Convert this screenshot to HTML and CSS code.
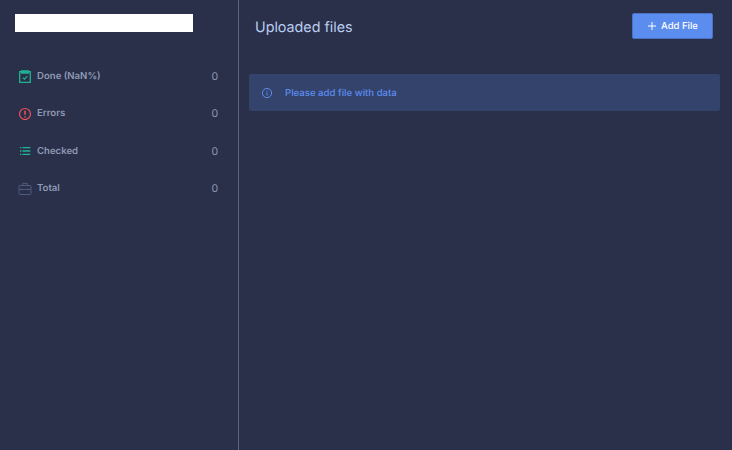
FILE: index.html
```html
<!DOCTYPE html>
<html lang="en">
<head>
<meta charset="utf-8">
<title>Uploaded files</title>
<link rel="stylesheet" href="styles.css">
</head>
<body>
<div class="app">
  <aside class="sidebar">
    <div class="logo"></div>
    <ul class="stats">
      <li class="stat">
        <svg class="icon" viewBox="0 0 14 14" fill="none" stroke="#1fb394" stroke-width="1.3"><path d="M3.5 2.7H1.7v10.6h10.6V2.7h-1.8"/><path d="M3.5 2h7v2h-7z" fill="#1fb394"/><path d="M4.8 8.6l1.6 1.5 2.9-3" stroke-width="1.2"/></svg>
        <span class="label">Done (NaN%)</span><span class="value">0</span>
      </li>
      <li class="stat">
        <svg class="icon" viewBox="0 0 14 14" fill="none" stroke="#f0525a" stroke-width="1.2"><circle cx="7" cy="8" r="5.5"/><path d="M7 4.8v4M7 10.2v1.2" stroke-width="1.5"/></svg>
        <span class="label">Errors</span><span class="value">0</span>
      </li>
      <li class="stat">
        <svg class="icon" viewBox="0 0 14 14" fill="none" stroke="#1fb394" stroke-width="1.3"><path d="M2 4.6h1.4M2 8h1.4M2 11.4h1.4M4.4 4.6h7.9M4.4 8h7.9M4.4 11.4h7.9"/></svg>
        <span class="label">Checked</span><span class="value">0</span>
      </li>
      <li class="stat">
        <svg class="icon" viewBox="0 0 14 14" fill="none" stroke="#4d5b7c" stroke-width="1"><rect x="1" y="4.5" width="12" height="9" rx=".8"/><path d="M4.8 4.5V2.4h4.4v2.1M1 8.4h12M3.8 7.5v1.8M10.2 7.5v1.8"/></svg>
        <span class="label">Total</span><span class="value">0</span>
      </li>
    </ul>
  </aside>
  <main class="main">
    <header class="header">
      <h1 class="title">Uploaded files</h1>
      <button class="add-btn" type="button">
        <svg class="plus" viewBox="0 0 8 8" fill="none" stroke="#fff" stroke-width="1"><path d="M4 0v8M0 4h8"/></svg>
        Add File
      </button>
    </header>
    <div class="alert">
      <svg class="info" viewBox="0 0 12 12" fill="none" stroke="#5b8def" stroke-width="1"><circle cx="6" cy="6" r="4.6"/><path d="M6 5.4v3M6 3.4v1"/></svg>
      <span class="alert-text">Please add file with data</span>
    </div>
  </main>
</div>
</body>
</html>
```
FILE: styles.css
```css
* { box-sizing: border-box; }
html, body { margin: 0; height: 100%; }
body {
  background: #2a3049;
  font-family: Inter, "Liberation Sans", sans-serif;
  text-rendering: geometricPrecision;
  overflow: hidden;
}
.app { display: flex; height: 450px; }
.sidebar {
  width: 239px;
  flex: none;
  border-right: 1px solid #5c657f;
  padding: 14px 20px 0 15px;
}
.logo { width: 178px; height: 18px; background: #fff; }
.stats { list-style: none; margin: 25px 0 0; padding: 0 0 0 4px; }
.stat {
  display: flex;
  align-items: center;
  height: 37.3px;
  font-size: 9.6px;
  color: #8e9ab5;
}
.icon { width: 14px; height: 14px; flex: none; margin-right: 5px; margin-left: -1px; }
.label { flex: 1; font-weight: 600; padding-top: 2px; }
.value { font-size: 10.5px; color: #8e9ab5; padding-top: 2px; }
.main { flex: 1; min-width: 0; padding: 13px 12px 0 10px; }
.header { display: flex; align-items: center; justify-content: space-between; padding: 0 7px 0 6px; }
.title { margin: 0; padding-top: 2px; font-size: 14.3px; font-weight: 400; color: #b9cdf2; }
.add-btn {
  display: flex;
  align-items: center;
  justify-content: center;
  gap: 5px;
  width: 81px;
  height: 26px;
  padding: 0 0 0 1px;
  border: 1px solid #4a72c4;
  border-radius: 2px;
  background: #5b8def;
  color: #fff;
  font: 500 9.5px Inter, "Liberation Sans", sans-serif;
  text-rendering: geometricPrecision;
}
.plus { width: 8px; height: 8px; }
.alert {
  display: flex;
  align-items: center;
  height: 37px;
  margin-top: 35px;
  padding-left: 12px;
  gap: 12px;
  border-radius: 2px;
  background: #34436b;
  color: #5b8def;
  font-size: 9.6px;
  font-weight: 500;
}
.alert-text { padding-top: 2px; }
.info { width: 12px; height: 12px; flex: none; }
```
